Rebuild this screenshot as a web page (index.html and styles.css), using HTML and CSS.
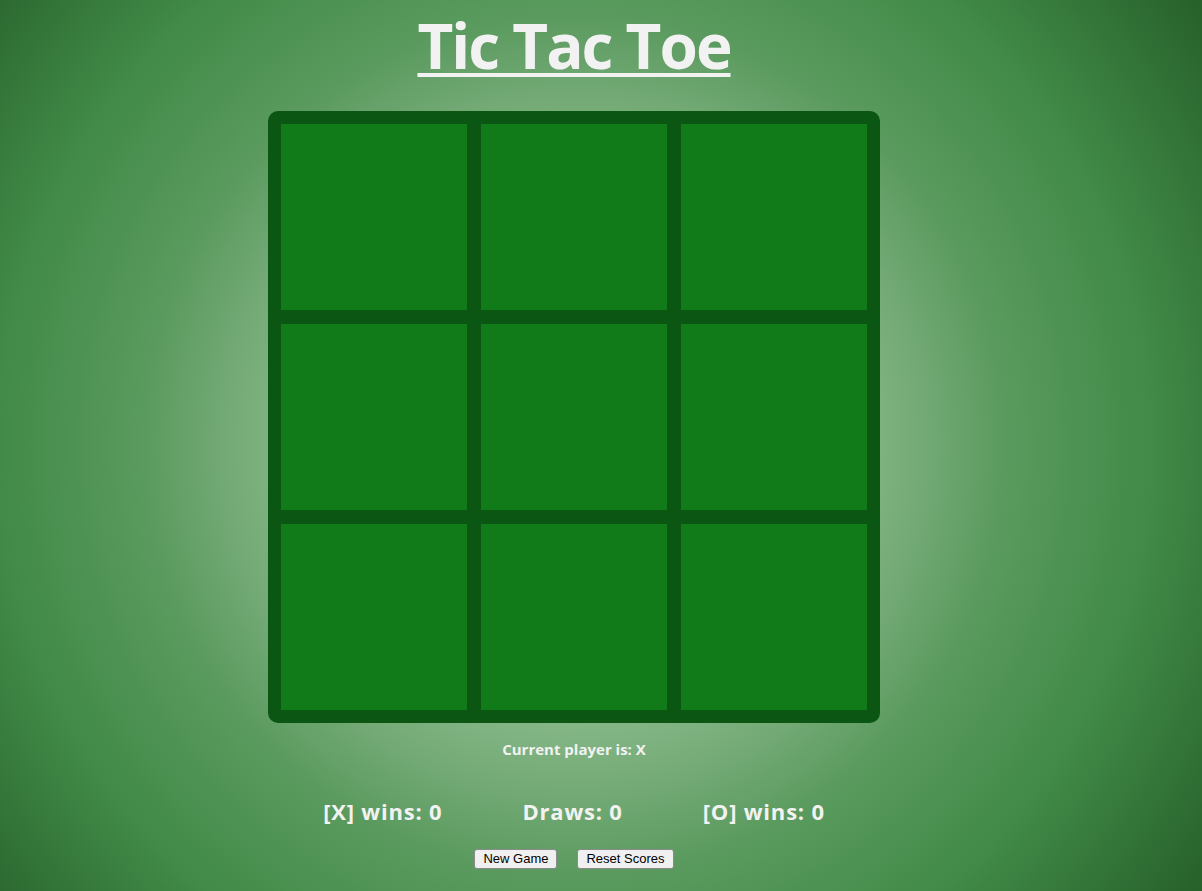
FILE: index.html
```html
<!DOCTYPE html>
<html lang="en">
<head>
<meta charset="utf-8">
<title>Tic Tac Toe</title>
<link rel="stylesheet" href="styles.css">
</head>
<body>
<main class="game">
  <h1 class="title">Tic Tac Toe</h1>
  <div class="board">
    <div class="cell"></div>
    <div class="cell"></div>
    <div class="cell"></div>
    <div class="cell"></div>
    <div class="cell"></div>
    <div class="cell"></div>
    <div class="cell"></div>
    <div class="cell"></div>
    <div class="cell"></div>
  </div>
  <p class="status">Current player is: X</p>
  <div class="scores">
    <span class="score">[X] wins: 0</span>
    <span class="score">Draws: 0</span>
    <span class="score">[O] wins: 0</span>
  </div>
  <div class="actions">
    <button class="btn" type="button">New Game</button>
    <button class="btn" type="button">Reset Scores</button>
  </div>
</main>
</body>
</html>
```
FILE: styles.css
```css
html, body {
  margin: 0;
  height: 100%;
}
body {
  background: radial-gradient(circle at 574px 445px, #b4d8b4 0%, #8fbf90 30%, #74aa76 45%, #5a9a5e 56%, #418a47 75%, #26602a 100%);
  font-family: "Open Sans", "Noto Sans", sans-serif;
  color: #f2f2f2;
  overflow: hidden;
}
.game {
  width: 1148px;
  display: flex;
  flex-direction: column;
  align-items: center;
}
.title {
  margin: 5px 0 0;
  height: 83px;
  font-size: 62px;
  line-height: 80px;
  font-weight: 700;
  letter-spacing: -2px;
  text-decoration: underline;
  text-decoration-thickness: 4px;
  text-underline-offset: 4px;
}
.board {
  margin-top: 23px;
  width: 612px;
  height: 612px;
  box-sizing: border-box;
  padding: 13px;
  background: #0b5612;
  border-radius: 10px;
  display: grid;
  grid-template-columns: repeat(3, 186px);
  grid-template-rows: repeat(3, 186px);
  gap: 14px;
}
.cell {
  background: #117a19;
}
.status {
  margin: 16px 0 0;
  font-size: 15px;
  line-height: 20px;
  font-weight: 700;
}
.scores {
  margin-top: 37px;
  display: flex;
  gap: 80px;
}
.score {
  font-size: 22px;
  line-height: 30px;
  font-weight: 700;
  letter-spacing: 0.8px;
}
.actions {
  margin-top: 23px;
  display: flex;
  gap: 20px;
}
.btn {
  font-family: "Liberation Sans", Arial, sans-serif;
  font-size: 13px;
  line-height: 16px;
  padding: 1px 8px;
  color: #000;
  background: #f0f0f0;
  border: 1px solid #8a8a8a;
  border-radius: 3px;
}
```
